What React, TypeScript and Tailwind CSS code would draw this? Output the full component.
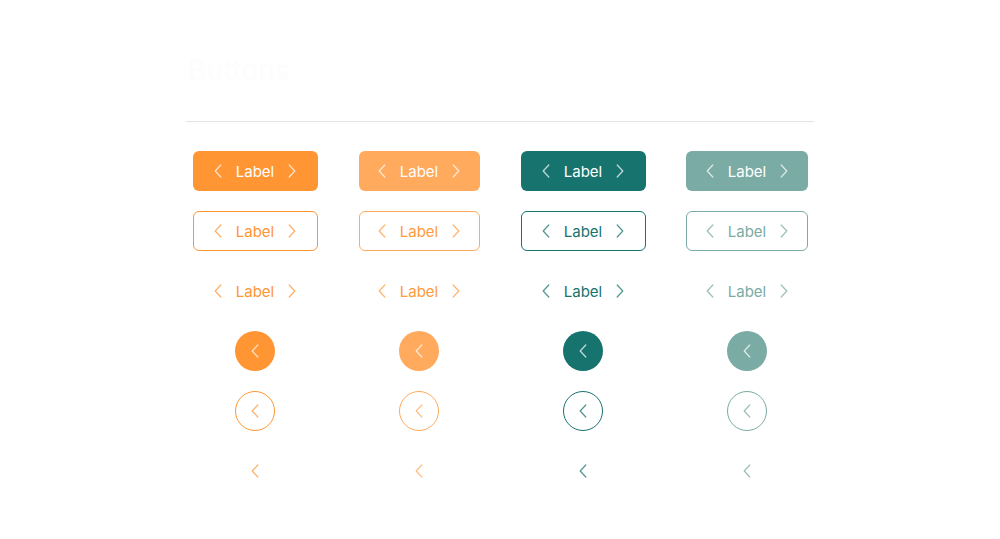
import React from 'react'

type Tone = {
  solid: string
  outline: string
  ghost: string
  circle: string
  circleOutline: string
  icon: string
  width: string
}

const tones: Tone[] = [
  {
    solid: 'bg-[#ff9533] text-white',
    outline: 'border border-[#ff9533] text-[#ff9533]',
    ghost: 'text-[#ff9533]',
    circle: 'bg-[#ff9533] text-white',
    circleOutline: 'border border-[#ff9533] text-[#ff9533]',
    icon: 'text-[#ff9533]',
    width: 'w-[125px]'
  },
  {
    solid: 'bg-[#ffaa5c] text-white',
    outline: 'border border-[#ffaa5c] text-[#ff9a3d]',
    ghost: 'text-[#ff9a3d]',
    circle: 'bg-[#ffaa5c] text-white',
    circleOutline: 'border border-[#ffaa5c] text-[#ffaa5c]',
    icon: 'text-[#ffaa5c]',
    width: 'w-[121px]'
  },
  {
    solid: 'bg-[#17736e] text-white',
    outline: 'border border-[#17736e] text-[#17736e]',
    ghost: 'text-[#17736e]',
    circle: 'bg-[#17736e] text-white',
    circleOutline: 'border border-[#17736e] text-[#17736e]',
    icon: 'text-[#17736e]',
    width: 'w-[125px]'
  },
  {
    solid: 'bg-[#7aaba4] text-white',
    outline: 'border border-[#7aaba4] text-[#7aaba4]',
    ghost: 'text-[#7aaba4]',
    circle: 'bg-[#7aaba4] text-white',
    circleOutline: 'border border-[#7aaba4] text-[#7aaba4]',
    icon: 'text-[#7aaba4]',
    width: 'w-[122px]'
  }
]

function Chevron({ dir = 'left' }: { dir?: 'left' | 'right' }) {
  return (
    <svg width="8" height="14" viewBox="0 0 8 14" fill="none" className="opacity-75">
      <path
        d={dir === 'left' ? 'M6.8 1 L1.2 7 L6.8 13' : 'M1.2 1 L6.8 7 L1.2 13'}
        stroke="currentColor"
        strokeWidth="1.2"
        strokeLinecap="round"
        strokeLinejoin="round"
      />
    </svg>
  )
}

function LabelButton({ cls, width }: { cls: string; width: string }) {
  return (
    <button className={`${cls} ${width} h-10 rounded-md flex items-center justify-center gap-[14px] text-[15px]`}>
      <Chevron dir="left" />
      <span className="leading-none">Label</span>
      <Chevron dir="right" />
    </button>
  )
}

function Round({ cls }: { cls: string }) {
  return (
    <button className={`${cls} w-10 h-10 rounded-full flex items-center justify-center`}>
      <Chevron dir="left" />
    </button>
  )
}

export default function App() {
  return (
    <div className="w-full h-[539px] bg-white font-['Inter',sans-serif]">
      <div className="w-[628px] mx-auto pt-[54px]">
        <h1 className="text-[28px] text-[#fdfdfd] font-medium leading-8 pl-[2px]">Buttons</h1>
        <div className="mt-[35px] border-t border-[#e4e4e4]" />

        <div className="grid grid-cols-[repeat(4,138px)] gap-x-[26px] pt-[29px]">
          {tones.map((t, i) => (
            <div key={i} className="flex flex-col items-center gap-5">
              <LabelButton cls={t.solid} width={t.width} />
              <LabelButton cls={t.outline} width={t.width} />
              <LabelButton cls={t.ghost} width={t.width} />
              <Round cls={t.circle} />
              <Round cls={t.circleOutline} />
              <button className={`${t.icon} w-10 h-10 flex items-center justify-center`}>
                <Chevron dir="left" />
              </button>
            </div>
          ))}
        </div>
      </div>
    </div>
  )
}
